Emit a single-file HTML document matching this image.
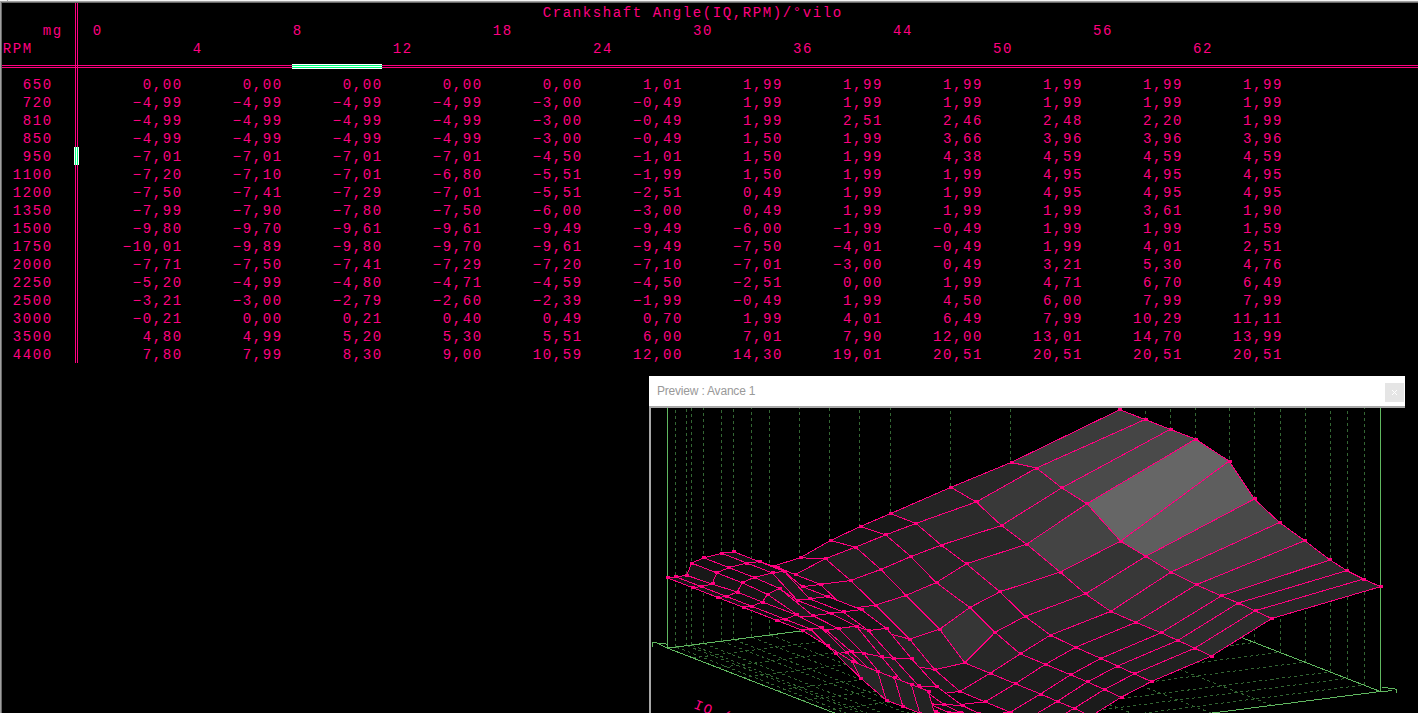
<!DOCTYPE html><html><head><meta charset="utf-8"><style>
html,body{margin:0;padding:0;background:#000;width:1418px;height:713px;overflow:hidden;position:relative}
.t{position:absolute;font-family:"Liberation Mono",monospace;font-size:14px;letter-spacing:1.600px;color:#ff0080;white-space:pre;line-height:18px}
</style></head><body>
<div style="position:absolute;left:0;top:0;width:1418px;height:1px;background:#f4f4f4"></div>
<div style="position:absolute;left:0;top:1px;width:1418px;height:1px;background:#a0a0a0"></div>
<div style="position:absolute;left:1px;top:2px;width:1417px;height:1px;background:#696969"></div>
<div style="position:absolute;left:0;top:1px;width:1px;height:712px;background:#a0a0a0"></div>
<div style="position:absolute;left:7px;top:0;width:1px;height:1px;background:#a0a0a0"></div>
<div style="position:absolute;left:1px;top:2px;width:1px;height:711px;background:#696969"></div>
<div class="t" style="left:542.80px;top:4px">Crankshaft Angle(IQ,RPM)/°vilo</div>
<div class="t" style="left:2.80px;top:22px">    mg   0                   8                   18                  30                  44                  56</div>
<div class="t" style="left:2.80px;top:40px">RPM                4                   12                  24                  36                  50                  62</div>
<div style="position:absolute;left:2px;top:65px;width:1416px;height:1px;background:#ff0080"></div>
<div style="position:absolute;left:2px;top:67px;width:1416px;height:1px;background:#ff0080"></div>
<div style="position:absolute;left:75px;top:3px;width:1px;height:360px;background:#ff0080"></div>
<div style="position:absolute;left:77px;top:3px;width:1px;height:360px;background:#ff0080"></div>
<div style="position:absolute;left:292px;top:64px;width:90px;height:5px;background:#fff"></div>
<div style="position:absolute;left:292px;top:65px;width:90px;height:1px;background:#00ff80"></div>
<div style="position:absolute;left:292px;top:67px;width:90px;height:1px;background:#00ff80"></div>
<div style="position:absolute;left:74px;top:147px;width:5px;height:18px;background:#fff"></div>
<div style="position:absolute;left:75px;top:147px;width:1px;height:18px;background:#00ff80"></div>
<div style="position:absolute;left:77px;top:147px;width:1px;height:18px;background:#00ff80"></div>
<div class="t" style="left:2.80px;top:76px">  650         0,00      0,00      0,00      0,00      0,00      1,01      1,99      1,99      1,99      1,99      1,99      1,99
  720        −4,99     −4,99     −4,99     −4,99     −3,00     −0,49      1,99      1,99      1,99      1,99      1,99      1,99
  810        −4,99     −4,99     −4,99     −4,99     −3,00     −0,49      1,99      2,51      2,46      2,48      2,20      1,99
  850        −4,99     −4,99     −4,99     −4,99     −3,00     −0,49      1,50      1,99      3,66      3,96      3,96      3,96
  950        −7,01     −7,01     −7,01     −7,01     −4,50     −1,01      1,50      1,99      4,38      4,59      4,59      4,59
 1100        −7,20     −7,10     −7,01     −6,80     −5,51     −1,99      1,50      1,99      1,99      4,95      4,95      4,95
 1200        −7,50     −7,41     −7,29     −7,01     −5,51     −2,51      0,49      1,99      1,99      4,95      4,95      4,95
 1350        −7,99     −7,90     −7,80     −7,50     −6,00     −3,00      0,49      1,99      1,99      1,99      3,61      1,90
 1500        −9,80     −9,70     −9,61     −9,61     −9,49     −9,49     −6,00     −1,99     −0,49      1,99      1,99      1,59
 1750       −10,01     −9,89     −9,80     −9,70     −9,61     −9,49     −7,50     −4,01     −0,49      1,99      4,01      2,51
 2000        −7,71     −7,50     −7,41     −7,29     −7,20     −7,10     −7,01     −3,00      0,49      3,21      5,30      4,76
 2250        −5,20     −4,99     −4,80     −4,71     −4,59     −4,50     −2,51      0,00      1,99      4,71      6,70      6,49
 2500        −3,21     −3,00     −2,79     −2,60     −2,39     −1,99     −0,49      1,99      4,50      6,00      7,99      7,99
 3000        −0,21      0,00      0,21      0,40      0,49      0,70      1,99      4,01      6,49      7,99     10,29     11,11
 3500         4,80      4,99      5,20      5,30      5,51      6,00      7,01      7,90     12,00     13,01     14,70     13,99
 4400         7,80      7,99      8,30      9,00     10,59     12,00     14,30     19,01     20,51     20,51     20,51     20,51</div>
<svg width="1418" height="713" style="position:absolute;left:0;top:0" shape-rendering="crispEdges">
<defs><clipPath id="cp"><rect x="651" y="408" width="767" height="305"/></clipPath></defs>
<g clip-path="url(#cp)">
<line x1="928.1" y1="749.4" x2="1380.4" y2="691.5" stroke="#336633" stroke-width="1" stroke-dasharray="3 3"/>
<line x1="911.3" y1="742.9" x2="1363.6" y2="685.0" stroke="#336633" stroke-width="1" stroke-dasharray="3 3"/>
<line x1="894.5" y1="736.3" x2="1346.8" y2="678.4" stroke="#336633" stroke-width="1" stroke-dasharray="3 3"/>
<line x1="877.7" y1="729.8" x2="1330.0" y2="671.9" stroke="#336633" stroke-width="1" stroke-dasharray="3 3"/>
<line x1="852.4" y1="720.0" x2="1304.7" y2="662.1" stroke="#336633" stroke-width="1" stroke-dasharray="3 3"/>
<line x1="827.2" y1="710.2" x2="1279.5" y2="652.3" stroke="#336633" stroke-width="1" stroke-dasharray="3 3"/>
<line x1="802.0" y1="700.4" x2="1254.3" y2="642.5" stroke="#336633" stroke-width="1" stroke-dasharray="3 3"/>
<line x1="776.8" y1="690.6" x2="1229.1" y2="632.7" stroke="#336633" stroke-width="1" stroke-dasharray="3 3"/>
<line x1="743.2" y1="677.5" x2="1195.5" y2="619.6" stroke="#336633" stroke-width="1" stroke-dasharray="3 3"/>
<line x1="717.9" y1="667.7" x2="1170.2" y2="609.8" stroke="#336633" stroke-width="1" stroke-dasharray="3 3"/>
<line x1="692.7" y1="657.9" x2="1145.0" y2="600.0" stroke="#336633" stroke-width="1" stroke-dasharray="3 3"/>
<line x1="667.5" y1="648.1" x2="1119.8" y2="590.2" stroke="#336633" stroke-width="1" stroke-dasharray="3 3"/>
<line x1="928.1" y1="749.4" x2="667.5" y2="648.1" stroke="#336633" stroke-width="1" stroke-dasharray="3 3"/>
<line x1="936.5" y1="748.3" x2="675.9" y2="647.0" stroke="#336633" stroke-width="1" stroke-dasharray="3 3"/>
<line x1="947.4" y1="746.9" x2="686.8" y2="645.6" stroke="#336633" stroke-width="1" stroke-dasharray="3 3"/>
<line x1="952.2" y1="746.3" x2="691.6" y2="645.0" stroke="#336633" stroke-width="1" stroke-dasharray="3 3"/>
<line x1="964.3" y1="744.8" x2="703.7" y2="643.5" stroke="#336633" stroke-width="1" stroke-dasharray="3 3"/>
<line x1="982.4" y1="742.5" x2="721.8" y2="641.2" stroke="#336633" stroke-width="1" stroke-dasharray="3 3"/>
<line x1="994.4" y1="740.9" x2="733.8" y2="639.6" stroke="#336633" stroke-width="1" stroke-dasharray="3 3"/>
<line x1="1012.5" y1="738.6" x2="751.9" y2="637.3" stroke="#336633" stroke-width="1" stroke-dasharray="3 3"/>
<line x1="1030.6" y1="736.3" x2="770.0" y2="635.0" stroke="#336633" stroke-width="1" stroke-dasharray="3 3"/>
<line x1="1060.8" y1="732.4" x2="800.2" y2="631.1" stroke="#336633" stroke-width="1" stroke-dasharray="3 3"/>
<line x1="1090.9" y1="728.6" x2="830.3" y2="627.3" stroke="#336633" stroke-width="1" stroke-dasharray="3 3"/>
<line x1="1121.1" y1="724.7" x2="860.5" y2="623.4" stroke="#336633" stroke-width="1" stroke-dasharray="3 3"/>
<line x1="1151.2" y1="720.8" x2="890.6" y2="619.5" stroke="#336633" stroke-width="1" stroke-dasharray="3 3"/>
<line x1="1211.5" y1="713.1" x2="950.9" y2="611.8" stroke="#336633" stroke-width="1" stroke-dasharray="3 3"/>
<line x1="1271.8" y1="705.4" x2="1011.2" y2="604.1" stroke="#336633" stroke-width="1" stroke-dasharray="3 3"/>
<line x1="1380.4" y1="691.5" x2="1119.8" y2="590.2" stroke="#336633" stroke-width="1" stroke-dasharray="3 3"/>
<line x1="675.5" y1="647.0" x2="675.5" y2="408" stroke="#336633" stroke-width="1" stroke-dasharray="3 3"/>
<line x1="686.5" y1="645.6" x2="686.5" y2="408" stroke="#336633" stroke-width="1" stroke-dasharray="3 3"/>
<line x1="691.5" y1="645.0" x2="691.5" y2="408" stroke="#336633" stroke-width="1" stroke-dasharray="3 3"/>
<line x1="703.5" y1="643.5" x2="703.5" y2="408" stroke="#336633" stroke-width="1" stroke-dasharray="3 3"/>
<line x1="721.5" y1="641.2" x2="721.5" y2="408" stroke="#336633" stroke-width="1" stroke-dasharray="3 3"/>
<line x1="733.5" y1="639.6" x2="733.5" y2="408" stroke="#336633" stroke-width="1" stroke-dasharray="3 3"/>
<line x1="751.5" y1="637.3" x2="751.5" y2="408" stroke="#336633" stroke-width="1" stroke-dasharray="3 3"/>
<line x1="769.5" y1="635.0" x2="769.5" y2="408" stroke="#336633" stroke-width="1" stroke-dasharray="3 3"/>
<line x1="799.5" y1="631.1" x2="799.5" y2="408" stroke="#336633" stroke-width="1" stroke-dasharray="3 3"/>
<line x1="829.5" y1="627.3" x2="829.5" y2="408" stroke="#336633" stroke-width="1" stroke-dasharray="3 3"/>
<line x1="859.5" y1="623.4" x2="859.5" y2="408" stroke="#336633" stroke-width="1" stroke-dasharray="3 3"/>
<line x1="890.5" y1="619.5" x2="890.5" y2="408" stroke="#336633" stroke-width="1" stroke-dasharray="3 3"/>
<line x1="950.5" y1="611.8" x2="950.5" y2="408" stroke="#336633" stroke-width="1" stroke-dasharray="3 3"/>
<line x1="1010.5" y1="604.1" x2="1010.5" y2="408" stroke="#336633" stroke-width="1" stroke-dasharray="3 3"/>
<line x1="1364.5" y1="685.0" x2="1364.5" y2="408" stroke="#336633" stroke-width="1" stroke-dasharray="3 3"/>
<line x1="1347.5" y1="678.4" x2="1347.5" y2="408" stroke="#336633" stroke-width="1" stroke-dasharray="3 3"/>
<line x1="1330.5" y1="671.9" x2="1330.5" y2="408" stroke="#336633" stroke-width="1" stroke-dasharray="3 3"/>
<line x1="1305.5" y1="662.1" x2="1305.5" y2="408" stroke="#336633" stroke-width="1" stroke-dasharray="3 3"/>
<line x1="1280.5" y1="652.3" x2="1280.5" y2="408" stroke="#336633" stroke-width="1" stroke-dasharray="3 3"/>
<line x1="1254.5" y1="642.5" x2="1254.5" y2="408" stroke="#336633" stroke-width="1" stroke-dasharray="3 3"/>
<line x1="1229.5" y1="632.7" x2="1229.5" y2="408" stroke="#336633" stroke-width="1" stroke-dasharray="3 3"/>
<line x1="1195.5" y1="619.6" x2="1195.5" y2="408" stroke="#336633" stroke-width="1" stroke-dasharray="3 3"/>
<line x1="1170.5" y1="609.8" x2="1170.5" y2="408" stroke="#336633" stroke-width="1" stroke-dasharray="3 3"/>
<line x1="1145.5" y1="600.0" x2="1145.5" y2="408" stroke="#336633" stroke-width="1" stroke-dasharray="3 3"/>
<polygon points="667.5,648.1 1119.8,590.2 1380.4,691.5 928.1,749.4" fill="none" stroke="#60b860" stroke-width="1"/>
<line x1="667.5" y1="648.1" x2="667.5" y2="400" stroke="#60b860" stroke-width="1"/>
<line x1="1380.5" y1="691.5" x2="1380.5" y2="400" stroke="#60b860" stroke-width="1"/>
<line x1="1119.5" y1="590.2" x2="1119.5" y2="400" stroke="#60b860" stroke-width="1"/>
<polyline points="652.5,646.5 652.5,642.5 656.5,642.5" fill="none" stroke="#60b860" stroke-width="1"/>
<polyline points="656,642.5 667,648" fill="none" stroke="#60b860" stroke-width="1"/>
<polyline points="657,643.5 665,643.5 667,644.5" fill="none" stroke="#60b860" stroke-width="1"/>
<polyline points="1377,691.5 1384,691.5 1392,690.5" fill="none" stroke="#60b860" stroke-width="1"/>
<polyline points="1382,687.5 1393,688.5 1396.5,689.5 1396.5,693" fill="none" stroke="#60b860" stroke-width="1"/>
<text x="693" y="708" transform="rotate(21.3 693 708)" font-family="Liberation Mono" font-size="14" letter-spacing="1.6" fill="#ff0080">IQ (mg)</text>
<polygon points="1036.5,468.0 1145.0,419.5 1119.8,409.7 1011.2,462.4" fill="#3b3b3b" stroke="#ff0080" stroke-width="1"/>
<rect x="1035" y="467" width="4" height="3" fill="#ff0080"/>
<rect x="1144" y="418" width="4" height="3" fill="#ff0080"/>
<rect x="1118" y="408" width="4" height="3" fill="#ff0080"/>
<rect x="1010" y="461" width="4" height="3" fill="#ff0080"/>
<polygon points="1061.7,487.9 1170.2,429.3 1145.0,419.5 1036.5,468.0" fill="#454545" stroke="#ff0080" stroke-width="1"/>
<rect x="1060" y="486" width="4" height="3" fill="#ff0080"/>
<rect x="1169" y="428" width="4" height="3" fill="#ff0080"/>
<rect x="1144" y="418" width="4" height="3" fill="#ff0080"/>
<rect x="1035" y="467" width="4" height="3" fill="#ff0080"/>
<polygon points="976.2,502.0 1036.5,468.0 1011.2,462.4 950.9,487.3" fill="#282828" stroke="#ff0080" stroke-width="1"/>
<rect x="975" y="500" width="4" height="3" fill="#ff0080"/>
<rect x="1035" y="467" width="4" height="3" fill="#ff0080"/>
<rect x="1010" y="461" width="4" height="3" fill="#ff0080"/>
<rect x="949" y="486" width="4" height="3" fill="#ff0080"/>
<polygon points="915.9,523.4 976.2,502.0 950.9,487.3 890.6,513.6" fill="#242424" stroke="#ff0080" stroke-width="1"/>
<rect x="914" y="522" width="4" height="3" fill="#ff0080"/>
<rect x="975" y="500" width="4" height="3" fill="#ff0080"/>
<rect x="949" y="486" width="4" height="3" fill="#ff0080"/>
<rect x="889" y="512" width="4" height="3" fill="#ff0080"/>
<polygon points="1086.9,503.7 1195.5,439.1 1170.2,429.3 1061.7,487.9" fill="#4a4a4a" stroke="#ff0080" stroke-width="1"/>
<rect x="1085" y="502" width="4" height="3" fill="#ff0080"/>
<rect x="1194" y="438" width="4" height="3" fill="#ff0080"/>
<rect x="1169" y="428" width="4" height="3" fill="#ff0080"/>
<rect x="1060" y="486" width="4" height="3" fill="#ff0080"/>
<polygon points="1001.4,525.5 1061.7,487.9 1036.5,468.0 976.2,502.0" fill="#393939" stroke="#ff0080" stroke-width="1"/>
<rect x="1000" y="524" width="4" height="3" fill="#ff0080"/>
<rect x="1060" y="486" width="4" height="3" fill="#ff0080"/>
<rect x="1035" y="467" width="4" height="3" fill="#ff0080"/>
<rect x="975" y="500" width="4" height="3" fill="#ff0080"/>
<polygon points="885.7,534.9 915.9,523.4 890.6,513.6 860.5,526.4" fill="#181818" stroke="#ff0080" stroke-width="1"/>
<rect x="884" y="533" width="4" height="3" fill="#ff0080"/>
<rect x="914" y="522" width="4" height="3" fill="#ff0080"/>
<rect x="889" y="512" width="4" height="3" fill="#ff0080"/>
<rect x="859" y="525" width="4" height="3" fill="#ff0080"/>
<polygon points="855.5,547.1 885.7,534.9 860.5,526.4 830.3,540.6" fill="#161616" stroke="#ff0080" stroke-width="1"/>
<rect x="854" y="546" width="4" height="3" fill="#ff0080"/>
<rect x="884" y="533" width="4" height="3" fill="#ff0080"/>
<rect x="859" y="525" width="4" height="3" fill="#ff0080"/>
<rect x="829" y="539" width="4" height="3" fill="#ff0080"/>
<polygon points="941.1,545.1 1001.4,525.5 976.2,502.0 915.9,523.4" fill="#2b2b2b" stroke="#ff0080" stroke-width="1"/>
<rect x="940" y="544" width="4" height="3" fill="#ff0080"/>
<rect x="1000" y="524" width="4" height="3" fill="#ff0080"/>
<rect x="975" y="500" width="4" height="3" fill="#ff0080"/>
<rect x="914" y="522" width="4" height="3" fill="#ff0080"/>
<polygon points="1026.6,544.2 1086.9,503.7 1061.7,487.9 1001.4,525.5" fill="#383838" stroke="#ff0080" stroke-width="1"/>
<rect x="1025" y="543" width="4" height="3" fill="#ff0080"/>
<rect x="1085" y="502" width="4" height="3" fill="#ff0080"/>
<rect x="1060" y="486" width="4" height="3" fill="#ff0080"/>
<rect x="1000" y="524" width="4" height="3" fill="#ff0080"/>
<polygon points="1120.5,541.2 1229.1,461.1 1195.5,439.1 1086.9,503.7" fill="#666666" stroke="#ff0080" stroke-width="1"/>
<rect x="1119" y="540" width="4" height="3" fill="#ff0080"/>
<rect x="1228" y="460" width="4" height="3" fill="#ff0080"/>
<rect x="1194" y="438" width="4" height="3" fill="#ff0080"/>
<rect x="1085" y="502" width="4" height="3" fill="#ff0080"/>
<polygon points="825.4,558.7 855.5,547.1 830.3,540.6 800.2,557.8" fill="#131313" stroke="#ff0080" stroke-width="1"/>
<rect x="824" y="557" width="4" height="3" fill="#ff0080"/>
<rect x="854" y="546" width="4" height="3" fill="#ff0080"/>
<rect x="829" y="539" width="4" height="3" fill="#ff0080"/>
<rect x="799" y="556" width="4" height="3" fill="#ff0080"/>
<polygon points="910.9,556.6 941.1,545.1 915.9,523.4 885.7,534.9" fill="#222222" stroke="#ff0080" stroke-width="1"/>
<rect x="909" y="555" width="4" height="3" fill="#ff0080"/>
<rect x="940" y="544" width="4" height="3" fill="#ff0080"/>
<rect x="914" y="522" width="4" height="3" fill="#ff0080"/>
<rect x="884" y="533" width="4" height="3" fill="#ff0080"/>
<polygon points="795.2,574.6 825.4,558.7 800.2,557.8 770.0,567.1" fill="#121212" stroke="#ff0080" stroke-width="1"/>
<rect x="794" y="573" width="4" height="3" fill="#ff0080"/>
<rect x="824" y="557" width="4" height="3" fill="#ff0080"/>
<rect x="799" y="556" width="4" height="3" fill="#ff0080"/>
<rect x="769" y="566" width="4" height="3" fill="#ff0080"/>
<polygon points="880.8,569.4 910.9,556.6 885.7,534.9 855.5,547.1" fill="#222222" stroke="#ff0080" stroke-width="1"/>
<rect x="879" y="568" width="4" height="3" fill="#ff0080"/>
<rect x="909" y="555" width="4" height="3" fill="#ff0080"/>
<rect x="884" y="533" width="4" height="3" fill="#ff0080"/>
<rect x="854" y="546" width="4" height="3" fill="#ff0080"/>
<polygon points="966.3,563.8 1026.6,544.2 1001.4,525.5 941.1,545.1" fill="#272727" stroke="#ff0080" stroke-width="1"/>
<rect x="965" y="562" width="4" height="3" fill="#ff0080"/>
<rect x="1025" y="543" width="4" height="3" fill="#ff0080"/>
<rect x="1000" y="524" width="4" height="3" fill="#ff0080"/>
<rect x="940" y="544" width="4" height="3" fill="#ff0080"/>
<polygon points="777.1,567.2 795.2,574.6 770.0,567.1 751.9,567.6" fill="#141414" stroke="#ff0080" stroke-width="1"/>
<rect x="776" y="566" width="4" height="3" fill="#ff0080"/>
<rect x="794" y="573" width="4" height="3" fill="#ff0080"/>
<rect x="769" y="566" width="4" height="3" fill="#ff0080"/>
<rect x="750" y="566" width="4" height="3" fill="#ff0080"/>
<polygon points="759.1,561.6 777.1,567.2 751.9,567.6 733.8,551.8" fill="#111111" stroke="#ff0080" stroke-width="1"/>
<rect x="758" y="560" width="4" height="3" fill="#ff0080"/>
<rect x="776" y="566" width="4" height="3" fill="#ff0080"/>
<rect x="750" y="566" width="4" height="3" fill="#ff0080"/>
<rect x="732" y="550" width="4" height="3" fill="#ff0080"/>
<polygon points="850.6,580.5 880.8,569.4 855.5,547.1 825.4,558.7" fill="#222222" stroke="#ff0080" stroke-width="1"/>
<rect x="849" y="579" width="4" height="3" fill="#ff0080"/>
<rect x="879" y="568" width="4" height="3" fill="#ff0080"/>
<rect x="854" y="546" width="4" height="3" fill="#ff0080"/>
<rect x="824" y="557" width="4" height="3" fill="#ff0080"/>
<polygon points="1060.2,572.1 1120.5,541.2 1086.9,503.7 1026.6,544.2" fill="#444444" stroke="#ff0080" stroke-width="1"/>
<rect x="1059" y="571" width="4" height="3" fill="#ff0080"/>
<rect x="1119" y="540" width="4" height="3" fill="#ff0080"/>
<rect x="1085" y="502" width="4" height="3" fill="#ff0080"/>
<rect x="1025" y="543" width="4" height="3" fill="#ff0080"/>
<polygon points="1145.8,556.3 1254.3,499.0 1229.1,461.1 1120.5,541.2" fill="#5e5e5e" stroke="#ff0080" stroke-width="1"/>
<rect x="1144" y="555" width="4" height="3" fill="#ff0080"/>
<rect x="1253" y="497" width="4" height="3" fill="#ff0080"/>
<rect x="1228" y="460" width="4" height="3" fill="#ff0080"/>
<rect x="1119" y="540" width="4" height="3" fill="#ff0080"/>
<polygon points="747.0,563.1 759.1,561.6 733.8,551.8 721.8,553.3" fill="#161616" stroke="#ff0080" stroke-width="1"/>
<rect x="745" y="562" width="4" height="3" fill="#ff0080"/>
<rect x="758" y="560" width="4" height="3" fill="#ff0080"/>
<rect x="732" y="550" width="4" height="3" fill="#ff0080"/>
<rect x="720" y="552" width="4" height="3" fill="#ff0080"/>
<polygon points="936.1,582.6 966.3,563.8 941.1,545.1 910.9,556.6" fill="#262626" stroke="#ff0080" stroke-width="1"/>
<rect x="935" y="581" width="4" height="3" fill="#ff0080"/>
<rect x="965" y="562" width="4" height="3" fill="#ff0080"/>
<rect x="940" y="544" width="4" height="3" fill="#ff0080"/>
<rect x="909" y="555" width="4" height="3" fill="#ff0080"/>
<polygon points="728.9,567.6 747.0,563.1 721.8,553.3 703.7,557.8" fill="#111111" stroke="#ff0080" stroke-width="1"/>
<rect x="727" y="566" width="4" height="3" fill="#ff0080"/>
<rect x="745" y="562" width="4" height="3" fill="#ff0080"/>
<rect x="720" y="552" width="4" height="3" fill="#ff0080"/>
<rect x="702" y="556" width="4" height="3" fill="#ff0080"/>
<polygon points="820.5,584.4 850.6,580.5 825.4,558.7 795.2,574.6" fill="#1c1c1c" stroke="#ff0080" stroke-width="1"/>
<rect x="819" y="583" width="4" height="3" fill="#ff0080"/>
<rect x="849" y="579" width="4" height="3" fill="#ff0080"/>
<rect x="824" y="557" width="4" height="3" fill="#ff0080"/>
<rect x="794" y="573" width="4" height="3" fill="#ff0080"/>
<polygon points="716.8,572.9 728.9,567.6 703.7,557.8 691.6,563.1" fill="#101010" stroke="#ff0080" stroke-width="1"/>
<rect x="715" y="571" width="4" height="3" fill="#ff0080"/>
<rect x="727" y="566" width="4" height="3" fill="#ff0080"/>
<rect x="702" y="556" width="4" height="3" fill="#ff0080"/>
<rect x="690" y="562" width="4" height="3" fill="#ff0080"/>
<polygon points="906.0,595.4 936.1,582.6 910.9,556.6 880.8,569.4" fill="#252525" stroke="#ff0080" stroke-width="1"/>
<rect x="904" y="594" width="4" height="3" fill="#ff0080"/>
<rect x="935" y="581" width="4" height="3" fill="#ff0080"/>
<rect x="909" y="555" width="4" height="3" fill="#ff0080"/>
<rect x="879" y="568" width="4" height="3" fill="#ff0080"/>
<polygon points="712.0,584.0 716.8,572.9 691.6,563.1 686.8,575.4" fill="#181818" stroke="#ff0080" stroke-width="1"/>
<rect x="711" y="582" width="4" height="3" fill="#ff0080"/>
<rect x="715" y="571" width="4" height="3" fill="#ff0080"/>
<rect x="690" y="562" width="4" height="3" fill="#ff0080"/>
<rect x="685" y="574" width="4" height="3" fill="#ff0080"/>
<polygon points="802.4,586.7 820.5,584.4 795.2,574.6 777.1,567.2" fill="#141414" stroke="#ff0080" stroke-width="1"/>
<rect x="801" y="585" width="4" height="3" fill="#ff0080"/>
<rect x="819" y="583" width="4" height="3" fill="#ff0080"/>
<rect x="794" y="573" width="4" height="3" fill="#ff0080"/>
<rect x="776" y="566" width="4" height="3" fill="#ff0080"/>
<polygon points="701.2,586.6 712.0,584.0 686.8,575.4 675.9,576.8" fill="#161616" stroke="#ff0080" stroke-width="1"/>
<rect x="700" y="585" width="4" height="3" fill="#ff0080"/>
<rect x="711" y="582" width="4" height="3" fill="#ff0080"/>
<rect x="685" y="574" width="4" height="3" fill="#ff0080"/>
<rect x="674" y="575" width="4" height="3" fill="#ff0080"/>
<polygon points="999.9,591.8 1060.2,572.1 1026.6,544.2 966.3,563.8" fill="#303030" stroke="#ff0080" stroke-width="1"/>
<rect x="998" y="590" width="4" height="3" fill="#ff0080"/>
<rect x="1059" y="571" width="4" height="3" fill="#ff0080"/>
<rect x="1025" y="543" width="4" height="3" fill="#ff0080"/>
<rect x="965" y="562" width="4" height="3" fill="#ff0080"/>
<polygon points="692.7,587.7 701.2,586.6 675.9,576.8 667.5,577.9" fill="#161616" stroke="#ff0080" stroke-width="1"/>
<rect x="691" y="586" width="4" height="3" fill="#ff0080"/>
<rect x="700" y="585" width="4" height="3" fill="#ff0080"/>
<rect x="674" y="575" width="4" height="3" fill="#ff0080"/>
<rect x="666" y="576" width="4" height="3" fill="#ff0080"/>
<polygon points="784.3,571.4 802.4,586.7 777.1,567.2 759.1,561.6" fill="#141414" stroke="#ff0080" stroke-width="1"/>
<rect x="783" y="570" width="4" height="3" fill="#ff0080"/>
<rect x="801" y="585" width="4" height="3" fill="#ff0080"/>
<rect x="776" y="566" width="4" height="3" fill="#ff0080"/>
<rect x="758" y="560" width="4" height="3" fill="#ff0080"/>
<polygon points="875.8,605.1 906.0,595.4 880.8,569.4 850.6,580.5" fill="#232323" stroke="#ff0080" stroke-width="1"/>
<rect x="874" y="604" width="4" height="3" fill="#ff0080"/>
<rect x="904" y="594" width="4" height="3" fill="#ff0080"/>
<rect x="879" y="568" width="4" height="3" fill="#ff0080"/>
<rect x="849" y="579" width="4" height="3" fill="#ff0080"/>
<polygon points="1171.0,572.1 1279.5,522.5 1254.3,499.0 1145.8,556.3" fill="#494949" stroke="#ff0080" stroke-width="1"/>
<rect x="1169" y="571" width="4" height="3" fill="#ff0080"/>
<rect x="1278" y="521" width="4" height="3" fill="#ff0080"/>
<rect x="1253" y="497" width="4" height="3" fill="#ff0080"/>
<rect x="1144" y="555" width="4" height="3" fill="#ff0080"/>
<polygon points="772.2,572.9 784.3,571.4 759.1,561.6 747.0,563.1" fill="#121212" stroke="#ff0080" stroke-width="1"/>
<rect x="771" y="571" width="4" height="3" fill="#ff0080"/>
<rect x="783" y="570" width="4" height="3" fill="#ff0080"/>
<rect x="758" y="560" width="4" height="3" fill="#ff0080"/>
<rect x="745" y="562" width="4" height="3" fill="#ff0080"/>
<polygon points="1085.4,593.9 1145.8,556.3 1120.5,541.2 1060.2,572.1" fill="#343434" stroke="#ff0080" stroke-width="1"/>
<rect x="1084" y="592" width="4" height="3" fill="#ff0080"/>
<rect x="1144" y="555" width="4" height="3" fill="#ff0080"/>
<rect x="1119" y="540" width="4" height="3" fill="#ff0080"/>
<rect x="1059" y="571" width="4" height="3" fill="#ff0080"/>
<polygon points="754.1,577.4 772.2,572.9 747.0,563.1 728.9,567.6" fill="#111111" stroke="#ff0080" stroke-width="1"/>
<rect x="753" y="576" width="4" height="3" fill="#ff0080"/>
<rect x="771" y="571" width="4" height="3" fill="#ff0080"/>
<rect x="745" y="562" width="4" height="3" fill="#ff0080"/>
<rect x="727" y="566" width="4" height="3" fill="#ff0080"/>
<polygon points="969.8,607.5 999.9,591.8 966.3,563.8 936.1,582.6" fill="#2c2c2c" stroke="#ff0080" stroke-width="1"/>
<rect x="968" y="606" width="4" height="3" fill="#ff0080"/>
<rect x="998" y="590" width="4" height="3" fill="#ff0080"/>
<rect x="965" y="562" width="4" height="3" fill="#ff0080"/>
<rect x="935" y="581" width="4" height="3" fill="#ff0080"/>
<polygon points="845.7,608.9 875.8,605.1 850.6,580.5 820.5,584.4" fill="#1e1e1e" stroke="#ff0080" stroke-width="1"/>
<rect x="844" y="607" width="4" height="3" fill="#ff0080"/>
<rect x="874" y="604" width="4" height="3" fill="#ff0080"/>
<rect x="849" y="579" width="4" height="3" fill="#ff0080"/>
<rect x="819" y="583" width="4" height="3" fill="#ff0080"/>
<polygon points="742.1,582.7 754.1,577.4 728.9,567.6 716.8,572.9" fill="#101010" stroke="#ff0080" stroke-width="1"/>
<rect x="741" y="581" width="4" height="3" fill="#ff0080"/>
<rect x="753" y="576" width="4" height="3" fill="#ff0080"/>
<rect x="727" y="566" width="4" height="3" fill="#ff0080"/>
<rect x="715" y="571" width="4" height="3" fill="#ff0080"/>
<polygon points="737.2,592.1 742.1,582.7 716.8,572.9 712.0,584.0" fill="#161616" stroke="#ff0080" stroke-width="1"/>
<rect x="736" y="591" width="4" height="3" fill="#ff0080"/>
<rect x="741" y="581" width="4" height="3" fill="#ff0080"/>
<rect x="715" y="571" width="4" height="3" fill="#ff0080"/>
<rect x="711" y="582" width="4" height="3" fill="#ff0080"/>
<polygon points="827.6,596.5 845.7,608.9 820.5,584.4 802.4,586.7" fill="#141414" stroke="#ff0080" stroke-width="1"/>
<rect x="826" y="595" width="4" height="3" fill="#ff0080"/>
<rect x="844" y="607" width="4" height="3" fill="#ff0080"/>
<rect x="819" y="583" width="4" height="3" fill="#ff0080"/>
<rect x="801" y="585" width="4" height="3" fill="#ff0080"/>
<polygon points="726.4,596.4 737.2,592.1 712.0,584.0 701.2,586.6" fill="#161616" stroke="#ff0080" stroke-width="1"/>
<rect x="725" y="595" width="4" height="3" fill="#ff0080"/>
<rect x="736" y="591" width="4" height="3" fill="#ff0080"/>
<rect x="711" y="582" width="4" height="3" fill="#ff0080"/>
<rect x="700" y="585" width="4" height="3" fill="#ff0080"/>
<polygon points="939.6,629.2 969.8,607.5 936.1,582.6 906.0,595.4" fill="#2e2e2e" stroke="#ff0080" stroke-width="1"/>
<rect x="938" y="628" width="4" height="3" fill="#ff0080"/>
<rect x="968" y="606" width="4" height="3" fill="#ff0080"/>
<rect x="935" y="581" width="4" height="3" fill="#ff0080"/>
<rect x="904" y="594" width="4" height="3" fill="#ff0080"/>
<polygon points="717.9,597.5 726.4,596.4 701.2,586.6 692.7,587.7" fill="#161616" stroke="#ff0080" stroke-width="1"/>
<rect x="716" y="596" width="4" height="3" fill="#ff0080"/>
<rect x="725" y="595" width="4" height="3" fill="#ff0080"/>
<rect x="700" y="585" width="4" height="3" fill="#ff0080"/>
<rect x="691" y="586" width="4" height="3" fill="#ff0080"/>
<polygon points="809.5,598.8 827.6,596.5 802.4,586.7 784.3,571.4" fill="#1b1b1b" stroke="#ff0080" stroke-width="1"/>
<rect x="808" y="597" width="4" height="3" fill="#ff0080"/>
<rect x="826" y="595" width="4" height="3" fill="#ff0080"/>
<rect x="801" y="585" width="4" height="3" fill="#ff0080"/>
<rect x="783" y="570" width="4" height="3" fill="#ff0080"/>
<polygon points="1025.1,616.4 1085.4,593.9 1060.2,572.1 999.9,591.8" fill="#2c2c2c" stroke="#ff0080" stroke-width="1"/>
<rect x="1024" y="615" width="4" height="3" fill="#ff0080"/>
<rect x="1084" y="592" width="4" height="3" fill="#ff0080"/>
<rect x="1059" y="571" width="4" height="3" fill="#ff0080"/>
<rect x="998" y="590" width="4" height="3" fill="#ff0080"/>
<polygon points="1196.2,584.8 1304.7,540.7 1279.5,522.5 1171.0,572.1" fill="#3e3e3e" stroke="#ff0080" stroke-width="1"/>
<rect x="1195" y="583" width="4" height="3" fill="#ff0080"/>
<rect x="1303" y="539" width="4" height="3" fill="#ff0080"/>
<rect x="1278" y="521" width="4" height="3" fill="#ff0080"/>
<rect x="1169" y="571" width="4" height="3" fill="#ff0080"/>
<polygon points="797.4,600.4 809.5,598.8 784.3,571.4 772.2,572.9" fill="#1d1d1d" stroke="#ff0080" stroke-width="1"/>
<rect x="796" y="599" width="4" height="3" fill="#ff0080"/>
<rect x="808" y="597" width="4" height="3" fill="#ff0080"/>
<rect x="783" y="570" width="4" height="3" fill="#ff0080"/>
<rect x="771" y="571" width="4" height="3" fill="#ff0080"/>
<polygon points="909.5,639.1 939.6,629.2 906.0,595.4 875.8,605.1" fill="#2c2c2c" stroke="#ff0080" stroke-width="1"/>
<rect x="908" y="638" width="4" height="3" fill="#ff0080"/>
<rect x="938" y="628" width="4" height="3" fill="#ff0080"/>
<rect x="904" y="594" width="4" height="3" fill="#ff0080"/>
<rect x="874" y="604" width="4" height="3" fill="#ff0080"/>
<polygon points="1110.7,611.4 1171.0,572.1 1145.8,556.3 1085.4,593.9" fill="#383838" stroke="#ff0080" stroke-width="1"/>
<rect x="1109" y="610" width="4" height="3" fill="#ff0080"/>
<rect x="1169" y="571" width="4" height="3" fill="#ff0080"/>
<rect x="1144" y="555" width="4" height="3" fill="#ff0080"/>
<rect x="1084" y="592" width="4" height="3" fill="#ff0080"/>
<polygon points="779.3,588.4 797.4,600.4 772.2,572.9 754.1,577.4" fill="#1c1c1c" stroke="#ff0080" stroke-width="1"/>
<rect x="778" y="587" width="4" height="3" fill="#ff0080"/>
<rect x="796" y="599" width="4" height="3" fill="#ff0080"/>
<rect x="771" y="571" width="4" height="3" fill="#ff0080"/>
<rect x="753" y="576" width="4" height="3" fill="#ff0080"/>
<polygon points="767.3,594.3 779.3,588.4 754.1,577.4 742.1,582.7" fill="#121212" stroke="#ff0080" stroke-width="1"/>
<rect x="766" y="593" width="4" height="3" fill="#ff0080"/>
<rect x="778" y="587" width="4" height="3" fill="#ff0080"/>
<rect x="753" y="576" width="4" height="3" fill="#ff0080"/>
<rect x="741" y="581" width="4" height="3" fill="#ff0080"/>
<polygon points="995.0,632.3 1025.1,616.4 999.9,591.8 969.8,607.5" fill="#282828" stroke="#ff0080" stroke-width="1"/>
<rect x="993" y="631" width="4" height="3" fill="#ff0080"/>
<rect x="1024" y="615" width="4" height="3" fill="#ff0080"/>
<rect x="998" y="590" width="4" height="3" fill="#ff0080"/>
<rect x="968" y="606" width="4" height="3" fill="#ff0080"/>
<polygon points="879.3,630.9 909.5,639.1 875.8,605.1 845.7,608.9" fill="#222222" stroke="#ff0080" stroke-width="1"/>
<rect x="878" y="629" width="4" height="3" fill="#ff0080"/>
<rect x="908" y="638" width="4" height="3" fill="#ff0080"/>
<rect x="874" y="604" width="4" height="3" fill="#ff0080"/>
<rect x="844" y="607" width="4" height="3" fill="#ff0080"/>
<polygon points="762.5,602.0 767.3,594.3 742.1,582.7 737.2,592.1" fill="#151515" stroke="#ff0080" stroke-width="1"/>
<rect x="761" y="601" width="4" height="3" fill="#ff0080"/>
<rect x="766" y="593" width="4" height="3" fill="#ff0080"/>
<rect x="741" y="581" width="4" height="3" fill="#ff0080"/>
<rect x="736" y="591" width="4" height="3" fill="#ff0080"/>
<polygon points="751.6,606.2 762.5,602.0 737.2,592.1 726.4,596.4" fill="#111111" stroke="#ff0080" stroke-width="1"/>
<rect x="750" y="605" width="4" height="3" fill="#ff0080"/>
<rect x="761" y="601" width="4" height="3" fill="#ff0080"/>
<rect x="736" y="591" width="4" height="3" fill="#ff0080"/>
<rect x="725" y="595" width="4" height="3" fill="#ff0080"/>
<polygon points="743.2,607.3 751.6,606.2 726.4,596.4 717.9,597.5" fill="#161616" stroke="#ff0080" stroke-width="1"/>
<rect x="742" y="606" width="4" height="3" fill="#ff0080"/>
<rect x="750" y="605" width="4" height="3" fill="#ff0080"/>
<rect x="725" y="595" width="4" height="3" fill="#ff0080"/>
<rect x="716" y="596" width="4" height="3" fill="#ff0080"/>
<polygon points="861.2,609.6 879.3,630.9 845.7,608.9 827.6,596.5" fill="#1b1b1b" stroke="#ff0080" stroke-width="1"/>
<rect x="860" y="608" width="4" height="3" fill="#ff0080"/>
<rect x="878" y="629" width="4" height="3" fill="#ff0080"/>
<rect x="844" y="607" width="4" height="3" fill="#ff0080"/>
<rect x="826" y="595" width="4" height="3" fill="#ff0080"/>
<polygon points="964.8,662.9 995.0,632.3 969.8,607.5 939.6,629.2" fill="#363636" stroke="#ff0080" stroke-width="1"/>
<rect x="963" y="661" width="4" height="3" fill="#ff0080"/>
<rect x="993" y="631" width="4" height="3" fill="#ff0080"/>
<rect x="968" y="606" width="4" height="3" fill="#ff0080"/>
<rect x="938" y="628" width="4" height="3" fill="#ff0080"/>
<polygon points="1050.4,635.1 1110.7,611.4 1085.4,593.9 1025.1,616.4" fill="#2a2a2a" stroke="#ff0080" stroke-width="1"/>
<rect x="1049" y="634" width="4" height="3" fill="#ff0080"/>
<rect x="1109" y="610" width="4" height="3" fill="#ff0080"/>
<rect x="1084" y="592" width="4" height="3" fill="#ff0080"/>
<rect x="1024" y="615" width="4" height="3" fill="#ff0080"/>
<polygon points="1221.4,595.9 1330.0,559.9 1304.7,540.7 1196.2,584.8" fill="#373737" stroke="#ff0080" stroke-width="1"/>
<rect x="1220" y="594" width="4" height="3" fill="#ff0080"/>
<rect x="1328" y="558" width="4" height="3" fill="#ff0080"/>
<rect x="1303" y="539" width="4" height="3" fill="#ff0080"/>
<rect x="1195" y="583" width="4" height="3" fill="#ff0080"/>
<polygon points="843.1,611.9 861.2,609.6 827.6,596.5 809.5,598.8" fill="#111111" stroke="#ff0080" stroke-width="1"/>
<rect x="842" y="610" width="4" height="3" fill="#ff0080"/>
<rect x="860" y="608" width="4" height="3" fill="#ff0080"/>
<rect x="826" y="595" width="4" height="3" fill="#ff0080"/>
<rect x="808" y="597" width="4" height="3" fill="#ff0080"/>
<polygon points="1135.9,622.4 1196.2,584.8 1171.0,572.1 1110.7,611.4" fill="#333333" stroke="#ff0080" stroke-width="1"/>
<rect x="1134" y="621" width="4" height="3" fill="#ff0080"/>
<rect x="1195" y="583" width="4" height="3" fill="#ff0080"/>
<rect x="1169" y="571" width="4" height="3" fill="#ff0080"/>
<rect x="1109" y="610" width="4" height="3" fill="#ff0080"/>
<polygon points="831.1,613.4 843.1,611.9 809.5,598.8 797.4,600.4" fill="#121212" stroke="#ff0080" stroke-width="1"/>
<rect x="830" y="612" width="4" height="3" fill="#ff0080"/>
<rect x="842" y="610" width="4" height="3" fill="#ff0080"/>
<rect x="808" y="597" width="4" height="3" fill="#ff0080"/>
<rect x="796" y="599" width="4" height="3" fill="#ff0080"/>
<polygon points="934.7,669.7 964.8,662.9 939.6,629.2 909.5,639.1" fill="#282828" stroke="#ff0080" stroke-width="1"/>
<rect x="933" y="668" width="4" height="3" fill="#ff0080"/>
<rect x="963" y="661" width="4" height="3" fill="#ff0080"/>
<rect x="938" y="628" width="4" height="3" fill="#ff0080"/>
<rect x="908" y="638" width="4" height="3" fill="#ff0080"/>
<polygon points="813.0,615.7 831.1,613.4 797.4,600.4 779.3,588.4" fill="#171717" stroke="#ff0080" stroke-width="1"/>
<rect x="811" y="614" width="4" height="3" fill="#ff0080"/>
<rect x="830" y="612" width="4" height="3" fill="#ff0080"/>
<rect x="796" y="599" width="4" height="3" fill="#ff0080"/>
<rect x="778" y="587" width="4" height="3" fill="#ff0080"/>
<polygon points="1020.2,653.9 1050.4,635.1 1025.1,616.4 995.0,632.3" fill="#262626" stroke="#ff0080" stroke-width="1"/>
<rect x="1019" y="652" width="4" height="3" fill="#ff0080"/>
<rect x="1049" y="634" width="4" height="3" fill="#ff0080"/>
<rect x="1024" y="615" width="4" height="3" fill="#ff0080"/>
<rect x="993" y="631" width="4" height="3" fill="#ff0080"/>
<polygon points="800.9,617.3 813.0,615.7 779.3,588.4 767.3,594.3" fill="#1d1d1d" stroke="#ff0080" stroke-width="1"/>
<rect x="799" y="616" width="4" height="3" fill="#ff0080"/>
<rect x="811" y="614" width="4" height="3" fill="#ff0080"/>
<rect x="778" y="587" width="4" height="3" fill="#ff0080"/>
<rect x="766" y="593" width="4" height="3" fill="#ff0080"/>
<polygon points="904.5,664.6 934.7,669.7 909.5,639.1 879.3,630.9" fill="#262626" stroke="#ff0080" stroke-width="1"/>
<rect x="903" y="663" width="4" height="3" fill="#ff0080"/>
<rect x="933" y="668" width="4" height="3" fill="#ff0080"/>
<rect x="908" y="638" width="4" height="3" fill="#ff0080"/>
<rect x="878" y="629" width="4" height="3" fill="#ff0080"/>
<polygon points="796.1,614.8 800.9,617.3 767.3,594.3 762.5,602.0" fill="#171717" stroke="#ff0080" stroke-width="1"/>
<rect x="795" y="613" width="4" height="3" fill="#ff0080"/>
<rect x="799" y="616" width="4" height="3" fill="#ff0080"/>
<rect x="766" y="593" width="4" height="3" fill="#ff0080"/>
<rect x="761" y="601" width="4" height="3" fill="#ff0080"/>
<polygon points="1238.2,603.0 1346.8,570.6 1330.0,559.9 1221.4,595.9" fill="#2b2b2b" stroke="#ff0080" stroke-width="1"/>
<rect x="1237" y="602" width="4" height="3" fill="#ff0080"/>
<rect x="1345" y="569" width="4" height="3" fill="#ff0080"/>
<rect x="1328" y="558" width="4" height="3" fill="#ff0080"/>
<rect x="1220" y="594" width="4" height="3" fill="#ff0080"/>
<polygon points="785.2,619.3 796.1,614.8 762.5,602.0 751.6,606.2" fill="#121212" stroke="#ff0080" stroke-width="1"/>
<rect x="784" y="618" width="4" height="3" fill="#ff0080"/>
<rect x="795" y="613" width="4" height="3" fill="#ff0080"/>
<rect x="761" y="601" width="4" height="3" fill="#ff0080"/>
<rect x="750" y="605" width="4" height="3" fill="#ff0080"/>
<polygon points="990.1,673.3 1020.2,653.9 995.0,632.3 964.8,662.9" fill="#282828" stroke="#ff0080" stroke-width="1"/>
<rect x="989" y="672" width="4" height="3" fill="#ff0080"/>
<rect x="1019" y="652" width="4" height="3" fill="#ff0080"/>
<rect x="993" y="631" width="4" height="3" fill="#ff0080"/>
<rect x="963" y="661" width="4" height="3" fill="#ff0080"/>
<polygon points="1075.6,647.3 1135.9,622.4 1110.7,611.4 1050.4,635.1" fill="#242424" stroke="#ff0080" stroke-width="1"/>
<rect x="1074" y="646" width="4" height="3" fill="#ff0080"/>
<rect x="1134" y="621" width="4" height="3" fill="#ff0080"/>
<rect x="1109" y="610" width="4" height="3" fill="#ff0080"/>
<rect x="1049" y="634" width="4" height="3" fill="#ff0080"/>
<polygon points="776.8,620.4 785.2,619.3 751.6,606.2 743.2,607.3" fill="#101010" stroke="#ff0080" stroke-width="1"/>
<rect x="775" y="619" width="4" height="3" fill="#ff0080"/>
<rect x="784" y="618" width="4" height="3" fill="#ff0080"/>
<rect x="750" y="605" width="4" height="3" fill="#ff0080"/>
<rect x="742" y="606" width="4" height="3" fill="#ff0080"/>
<polygon points="886.4,628.3 904.5,664.6 879.3,630.9 861.2,609.6" fill="#262626" stroke="#ff0080" stroke-width="1"/>
<rect x="885" y="627" width="4" height="3" fill="#ff0080"/>
<rect x="903" y="663" width="4" height="3" fill="#ff0080"/>
<rect x="878" y="629" width="4" height="3" fill="#ff0080"/>
<rect x="860" y="608" width="4" height="3" fill="#ff0080"/>
<polygon points="1161.1,632.8 1221.4,595.9 1196.2,584.8 1135.9,622.4" fill="#313131" stroke="#ff0080" stroke-width="1"/>
<rect x="1160" y="631" width="4" height="3" fill="#ff0080"/>
<rect x="1220" y="594" width="4" height="3" fill="#ff0080"/>
<rect x="1195" y="583" width="4" height="3" fill="#ff0080"/>
<rect x="1134" y="621" width="4" height="3" fill="#ff0080"/>
<polygon points="868.3,630.6 886.4,628.3 861.2,609.6 843.1,611.9" fill="#161616" stroke="#ff0080" stroke-width="1"/>
<rect x="867" y="629" width="4" height="3" fill="#ff0080"/>
<rect x="885" y="627" width="4" height="3" fill="#ff0080"/>
<rect x="860" y="608" width="4" height="3" fill="#ff0080"/>
<rect x="842" y="610" width="4" height="3" fill="#ff0080"/>
<polygon points="959.9,691.4 990.1,673.3 964.8,662.9 934.7,669.7" fill="#1d1d1d" stroke="#ff0080" stroke-width="1"/>
<rect x="958" y="690" width="4" height="3" fill="#ff0080"/>
<rect x="989" y="672" width="4" height="3" fill="#ff0080"/>
<rect x="963" y="661" width="4" height="3" fill="#ff0080"/>
<rect x="933" y="668" width="4" height="3" fill="#ff0080"/>
<polygon points="856.3,626.1 868.3,630.6 843.1,611.9 831.1,613.4" fill="#181818" stroke="#ff0080" stroke-width="1"/>
<rect x="855" y="625" width="4" height="3" fill="#ff0080"/>
<rect x="867" y="629" width="4" height="3" fill="#ff0080"/>
<rect x="842" y="610" width="4" height="3" fill="#ff0080"/>
<rect x="830" y="612" width="4" height="3" fill="#ff0080"/>
<polygon points="1045.4,664.3 1075.6,647.3 1050.4,635.1 1020.2,653.9" fill="#212121" stroke="#ff0080" stroke-width="1"/>
<rect x="1044" y="663" width="4" height="3" fill="#ff0080"/>
<rect x="1074" y="646" width="4" height="3" fill="#ff0080"/>
<rect x="1049" y="634" width="4" height="3" fill="#ff0080"/>
<rect x="1019" y="652" width="4" height="3" fill="#ff0080"/>
<polygon points="1255.0,610.8 1363.6,579.0 1346.8,570.6 1238.2,603.0" fill="#282828" stroke="#ff0080" stroke-width="1"/>
<rect x="1254" y="609" width="4" height="3" fill="#ff0080"/>
<rect x="1362" y="578" width="4" height="3" fill="#ff0080"/>
<rect x="1345" y="569" width="4" height="3" fill="#ff0080"/>
<rect x="1237" y="602" width="4" height="3" fill="#ff0080"/>
<polygon points="838.2,628.5 856.3,626.1 831.1,613.4 813.0,615.7" fill="#111111" stroke="#ff0080" stroke-width="1"/>
<rect x="837" y="627" width="4" height="3" fill="#ff0080"/>
<rect x="855" y="625" width="4" height="3" fill="#ff0080"/>
<rect x="830" y="612" width="4" height="3" fill="#ff0080"/>
<rect x="811" y="614" width="4" height="3" fill="#ff0080"/>
<polygon points="929.7,695.2 959.9,691.4 934.7,669.7 904.5,664.6" fill="#1f1f1f" stroke="#ff0080" stroke-width="1"/>
<rect x="928" y="694" width="4" height="3" fill="#ff0080"/>
<rect x="958" y="690" width="4" height="3" fill="#ff0080"/>
<rect x="933" y="668" width="4" height="3" fill="#ff0080"/>
<rect x="903" y="663" width="4" height="3" fill="#ff0080"/>
<polygon points="826.1,630.0 838.2,628.5 813.0,615.7 800.9,617.3" fill="#141414" stroke="#ff0080" stroke-width="1"/>
<rect x="825" y="629" width="4" height="3" fill="#ff0080"/>
<rect x="837" y="627" width="4" height="3" fill="#ff0080"/>
<rect x="811" y="614" width="4" height="3" fill="#ff0080"/>
<rect x="799" y="616" width="4" height="3" fill="#ff0080"/>
<polygon points="1015.3,683.7 1045.4,664.3 1020.2,653.9 990.1,673.3" fill="#202020" stroke="#ff0080" stroke-width="1"/>
<rect x="1014" y="682" width="4" height="3" fill="#ff0080"/>
<rect x="1044" y="663" width="4" height="3" fill="#ff0080"/>
<rect x="1019" y="652" width="4" height="3" fill="#ff0080"/>
<rect x="989" y="672" width="4" height="3" fill="#ff0080"/>
<polygon points="1100.8,658.4 1161.1,632.8 1135.9,622.4 1075.6,647.3" fill="#232323" stroke="#ff0080" stroke-width="1"/>
<rect x="1099" y="657" width="4" height="3" fill="#ff0080"/>
<rect x="1160" y="631" width="4" height="3" fill="#ff0080"/>
<rect x="1134" y="621" width="4" height="3" fill="#ff0080"/>
<rect x="1074" y="646" width="4" height="3" fill="#ff0080"/>
<polygon points="821.3,627.7 826.1,630.0 800.9,617.3 796.1,614.8" fill="#161616" stroke="#ff0080" stroke-width="1"/>
<rect x="820" y="626" width="4" height="3" fill="#ff0080"/>
<rect x="825" y="629" width="4" height="3" fill="#ff0080"/>
<rect x="799" y="616" width="4" height="3" fill="#ff0080"/>
<rect x="795" y="613" width="4" height="3" fill="#ff0080"/>
<polygon points="1177.9,640.4 1238.2,603.0 1221.4,595.9 1161.1,632.8" fill="#2e2e2e" stroke="#ff0080" stroke-width="1"/>
<rect x="1176" y="639" width="4" height="3" fill="#ff0080"/>
<rect x="1237" y="602" width="4" height="3" fill="#ff0080"/>
<rect x="1220" y="594" width="4" height="3" fill="#ff0080"/>
<rect x="1160" y="631" width="4" height="3" fill="#ff0080"/>
<polygon points="911.7,658.9 929.7,695.2 904.5,664.6 886.4,628.3" fill="#262626" stroke="#ff0080" stroke-width="1"/>
<rect x="910" y="657" width="4" height="3" fill="#ff0080"/>
<rect x="928" y="694" width="4" height="3" fill="#ff0080"/>
<rect x="903" y="663" width="4" height="3" fill="#ff0080"/>
<rect x="885" y="627" width="4" height="3" fill="#ff0080"/>
<polygon points="810.4,629.1 821.3,627.7 796.1,614.8 785.2,619.3" fill="#131313" stroke="#ff0080" stroke-width="1"/>
<rect x="809" y="628" width="4" height="3" fill="#ff0080"/>
<rect x="820" y="626" width="4" height="3" fill="#ff0080"/>
<rect x="795" y="613" width="4" height="3" fill="#ff0080"/>
<rect x="784" y="618" width="4" height="3" fill="#ff0080"/>
<polygon points="802.0,630.2 810.4,629.1 785.2,619.3 776.8,620.4" fill="#111111" stroke="#ff0080" stroke-width="1"/>
<rect x="801" y="629" width="4" height="3" fill="#ff0080"/>
<rect x="809" y="628" width="4" height="3" fill="#ff0080"/>
<rect x="784" y="618" width="4" height="3" fill="#ff0080"/>
<rect x="775" y="619" width="4" height="3" fill="#ff0080"/>
<polygon points="1271.8,618.5 1380.4,586.7 1363.6,579.0 1255.0,610.8" fill="#272727" stroke="#ff0080" stroke-width="1"/>
<rect x="1270" y="617" width="4" height="3" fill="#ff0080"/>
<rect x="1379" y="585" width="4" height="3" fill="#ff0080"/>
<rect x="1362" y="578" width="4" height="3" fill="#ff0080"/>
<rect x="1254" y="609" width="4" height="3" fill="#ff0080"/>
<polygon points="893.6,658.3 911.7,658.9 886.4,628.3 868.3,630.6" fill="#202020" stroke="#ff0080" stroke-width="1"/>
<rect x="892" y="657" width="4" height="3" fill="#ff0080"/>
<rect x="910" y="657" width="4" height="3" fill="#ff0080"/>
<rect x="885" y="627" width="4" height="3" fill="#ff0080"/>
<rect x="867" y="629" width="4" height="3" fill="#ff0080"/>
<polygon points="985.1,701.9 1015.3,683.7 990.1,673.3 959.9,691.4" fill="#1e1e1e" stroke="#ff0080" stroke-width="1"/>
<rect x="984" y="700" width="4" height="3" fill="#ff0080"/>
<rect x="1014" y="682" width="4" height="3" fill="#ff0080"/>
<rect x="989" y="672" width="4" height="3" fill="#ff0080"/>
<rect x="958" y="690" width="4" height="3" fill="#ff0080"/>
<polygon points="881.5,656.7 893.6,658.3 868.3,630.6 856.3,626.1" fill="#212121" stroke="#ff0080" stroke-width="1"/>
<rect x="880" y="655" width="4" height="3" fill="#ff0080"/>
<rect x="892" y="657" width="4" height="3" fill="#ff0080"/>
<rect x="867" y="629" width="4" height="3" fill="#ff0080"/>
<rect x="855" y="625" width="4" height="3" fill="#ff0080"/>
<polygon points="1070.6,674.8 1100.8,658.4 1075.6,647.3 1045.4,664.3" fill="#1c1c1c" stroke="#ff0080" stroke-width="1"/>
<rect x="1069" y="673" width="4" height="3" fill="#ff0080"/>
<rect x="1099" y="657" width="4" height="3" fill="#ff0080"/>
<rect x="1074" y="646" width="4" height="3" fill="#ff0080"/>
<rect x="1044" y="663" width="4" height="3" fill="#ff0080"/>
<polygon points="1194.7,648.2 1255.0,610.8 1238.2,603.0 1177.9,640.4" fill="#2d2d2d" stroke="#ff0080" stroke-width="1"/>
<rect x="1193" y="647" width="4" height="3" fill="#ff0080"/>
<rect x="1254" y="609" width="4" height="3" fill="#ff0080"/>
<rect x="1237" y="602" width="4" height="3" fill="#ff0080"/>
<rect x="1176" y="639" width="4" height="3" fill="#ff0080"/>
<polygon points="863.4,653.2 881.5,656.7 856.3,626.1 838.2,628.5" fill="#202020" stroke="#ff0080" stroke-width="1"/>
<rect x="862" y="652" width="4" height="3" fill="#ff0080"/>
<rect x="880" y="655" width="4" height="3" fill="#ff0080"/>
<rect x="855" y="625" width="4" height="3" fill="#ff0080"/>
<rect x="837" y="627" width="4" height="3" fill="#ff0080"/>
<polygon points="955.0,705.0 985.1,701.9 959.9,691.4 929.7,695.2" fill="#101010" stroke="#ff0080" stroke-width="1"/>
<rect x="953" y="704" width="4" height="3" fill="#ff0080"/>
<rect x="984" y="700" width="4" height="3" fill="#ff0080"/>
<rect x="958" y="690" width="4" height="3" fill="#ff0080"/>
<rect x="928" y="694" width="4" height="3" fill="#ff0080"/>
<polygon points="1117.6,666.0 1177.9,640.4 1161.1,632.8 1100.8,658.4" fill="#232323" stroke="#ff0080" stroke-width="1"/>
<rect x="1116" y="665" width="4" height="3" fill="#ff0080"/>
<rect x="1176" y="639" width="4" height="3" fill="#ff0080"/>
<rect x="1160" y="631" width="4" height="3" fill="#ff0080"/>
<rect x="1099" y="657" width="4" height="3" fill="#ff0080"/>
<polygon points="851.3,651.7 863.4,653.2 838.2,628.5 826.1,630.0" fill="#1b1b1b" stroke="#ff0080" stroke-width="1"/>
<rect x="850" y="650" width="4" height="3" fill="#ff0080"/>
<rect x="862" y="652" width="4" height="3" fill="#ff0080"/>
<rect x="837" y="627" width="4" height="3" fill="#ff0080"/>
<rect x="825" y="629" width="4" height="3" fill="#ff0080"/>
<polygon points="1040.5,694.0 1070.6,674.8 1045.4,664.3 1015.3,683.7" fill="#1e1e1e" stroke="#ff0080" stroke-width="1"/>
<rect x="1039" y="693" width="4" height="3" fill="#ff0080"/>
<rect x="1069" y="673" width="4" height="3" fill="#ff0080"/>
<rect x="1044" y="663" width="4" height="3" fill="#ff0080"/>
<rect x="1014" y="682" width="4" height="3" fill="#ff0080"/>
<polygon points="846.5,652.3 851.3,651.7 826.1,630.0 821.3,627.7" fill="#1d1d1d" stroke="#ff0080" stroke-width="1"/>
<rect x="845" y="651" width="4" height="3" fill="#ff0080"/>
<rect x="850" y="650" width="4" height="3" fill="#ff0080"/>
<rect x="825" y="629" width="4" height="3" fill="#ff0080"/>
<rect x="820" y="626" width="4" height="3" fill="#ff0080"/>
<polygon points="936.9,686.6 955.0,705.0 929.7,695.2 911.7,658.9" fill="#121212" stroke="#ff0080" stroke-width="1"/>
<rect x="935" y="685" width="4" height="3" fill="#ff0080"/>
<rect x="953" y="704" width="4" height="3" fill="#ff0080"/>
<rect x="928" y="694" width="4" height="3" fill="#ff0080"/>
<rect x="910" y="657" width="4" height="3" fill="#ff0080"/>
<polygon points="835.7,653.7 846.5,652.3 821.3,627.7 810.4,629.1" fill="#1b1b1b" stroke="#ff0080" stroke-width="1"/>
<rect x="834" y="652" width="4" height="3" fill="#ff0080"/>
<rect x="845" y="651" width="4" height="3" fill="#ff0080"/>
<rect x="820" y="626" width="4" height="3" fill="#ff0080"/>
<rect x="809" y="628" width="4" height="3" fill="#ff0080"/>
<polygon points="827.2,645.8 835.7,653.7 810.4,629.1 802.0,630.2" fill="#1a1a1a" stroke="#ff0080" stroke-width="1"/>
<rect x="826" y="644" width="4" height="3" fill="#ff0080"/>
<rect x="834" y="652" width="4" height="3" fill="#ff0080"/>
<rect x="809" y="628" width="4" height="3" fill="#ff0080"/>
<rect x="801" y="629" width="4" height="3" fill="#ff0080"/>
<polygon points="918.8,686.0 936.9,686.6 911.7,658.9 893.6,658.3" fill="#1e1e1e" stroke="#ff0080" stroke-width="1"/>
<rect x="917" y="684" width="4" height="3" fill="#ff0080"/>
<rect x="935" y="685" width="4" height="3" fill="#ff0080"/>
<rect x="910" y="657" width="4" height="3" fill="#ff0080"/>
<rect x="892" y="657" width="4" height="3" fill="#ff0080"/>
<polygon points="1010.3,712.2 1040.5,694.0 1015.3,683.7 985.1,701.9" fill="#1e1e1e" stroke="#ff0080" stroke-width="1"/>
<rect x="1009" y="711" width="4" height="3" fill="#ff0080"/>
<rect x="1039" y="693" width="4" height="3" fill="#ff0080"/>
<rect x="1014" y="682" width="4" height="3" fill="#ff0080"/>
<rect x="984" y="700" width="4" height="3" fill="#ff0080"/>
<polygon points="1211.5,656.0 1271.8,618.5 1255.0,610.8 1194.7,648.2" fill="#2c2c2c" stroke="#ff0080" stroke-width="1"/>
<rect x="1210" y="655" width="4" height="3" fill="#ff0080"/>
<rect x="1270" y="617" width="4" height="3" fill="#ff0080"/>
<rect x="1254" y="609" width="4" height="3" fill="#ff0080"/>
<rect x="1193" y="647" width="4" height="3" fill="#ff0080"/>
<polygon points="1087.5,681.9 1117.6,666.0 1100.8,658.4 1070.6,674.8" fill="#1b1b1b" stroke="#ff0080" stroke-width="1"/>
<rect x="1086" y="680" width="4" height="3" fill="#ff0080"/>
<rect x="1116" y="665" width="4" height="3" fill="#ff0080"/>
<rect x="1099" y="657" width="4" height="3" fill="#ff0080"/>
<rect x="1069" y="673" width="4" height="3" fill="#ff0080"/>
<polygon points="1134.4,673.8 1194.7,648.2 1177.9,640.4 1117.6,666.0" fill="#222222" stroke="#ff0080" stroke-width="1"/>
<rect x="1133" y="672" width="4" height="3" fill="#ff0080"/>
<rect x="1193" y="647" width="4" height="3" fill="#ff0080"/>
<rect x="1176" y="639" width="4" height="3" fill="#ff0080"/>
<rect x="1116" y="665" width="4" height="3" fill="#ff0080"/>
<polygon points="906.7,687.5 918.8,686.0 893.6,658.3 881.5,656.7" fill="#222222" stroke="#ff0080" stroke-width="1"/>
<rect x="905" y="686" width="4" height="3" fill="#ff0080"/>
<rect x="917" y="684" width="4" height="3" fill="#ff0080"/>
<rect x="892" y="657" width="4" height="3" fill="#ff0080"/>
<rect x="880" y="655" width="4" height="3" fill="#ff0080"/>
<polygon points="888.6,683.8 906.7,687.5 881.5,656.7 863.4,653.2" fill="#222222" stroke="#ff0080" stroke-width="1"/>
<rect x="887" y="682" width="4" height="3" fill="#ff0080"/>
<rect x="905" y="686" width="4" height="3" fill="#ff0080"/>
<rect x="880" y="655" width="4" height="3" fill="#ff0080"/>
<rect x="862" y="652" width="4" height="3" fill="#ff0080"/>
<polygon points="980.2,715.5 1010.3,712.2 985.1,701.9 955.0,705.0" fill="#101010" stroke="#ff0080" stroke-width="1"/>
<rect x="979" y="714" width="4" height="3" fill="#ff0080"/>
<rect x="1009" y="711" width="4" height="3" fill="#ff0080"/>
<rect x="984" y="700" width="4" height="3" fill="#ff0080"/>
<rect x="953" y="704" width="4" height="3" fill="#ff0080"/>
<polygon points="1057.3,701.3 1087.5,681.9 1070.6,674.8 1040.5,694.0" fill="#1c1c1c" stroke="#ff0080" stroke-width="1"/>
<rect x="1056" y="700" width="4" height="3" fill="#ff0080"/>
<rect x="1086" y="680" width="4" height="3" fill="#ff0080"/>
<rect x="1069" y="673" width="4" height="3" fill="#ff0080"/>
<rect x="1039" y="693" width="4" height="3" fill="#ff0080"/>
<polygon points="876.6,676.4 888.6,683.8 863.4,653.2 851.3,651.7" fill="#1f1f1f" stroke="#ff0080" stroke-width="1"/>
<rect x="875" y="675" width="4" height="3" fill="#ff0080"/>
<rect x="887" y="682" width="4" height="3" fill="#ff0080"/>
<rect x="862" y="652" width="4" height="3" fill="#ff0080"/>
<rect x="850" y="650" width="4" height="3" fill="#ff0080"/>
<polygon points="871.7,677.0 876.6,676.4 851.3,651.7 846.5,652.3" fill="#1d1d1d" stroke="#ff0080" stroke-width="1"/>
<rect x="870" y="676" width="4" height="3" fill="#ff0080"/>
<rect x="875" y="675" width="4" height="3" fill="#ff0080"/>
<rect x="850" y="650" width="4" height="3" fill="#ff0080"/>
<rect x="845" y="651" width="4" height="3" fill="#ff0080"/>
<polygon points="962.1,705.3 980.2,715.5 955.0,705.0 936.9,686.6" fill="#181818" stroke="#ff0080" stroke-width="1"/>
<rect x="961" y="704" width="4" height="3" fill="#ff0080"/>
<rect x="979" y="714" width="4" height="3" fill="#ff0080"/>
<rect x="953" y="704" width="4" height="3" fill="#ff0080"/>
<rect x="935" y="685" width="4" height="3" fill="#ff0080"/>
<polygon points="1104.3,689.5 1134.4,673.8 1117.6,666.0 1087.5,681.9" fill="#1a1a1a" stroke="#ff0080" stroke-width="1"/>
<rect x="1103" y="688" width="4" height="3" fill="#ff0080"/>
<rect x="1133" y="672" width="4" height="3" fill="#ff0080"/>
<rect x="1116" y="665" width="4" height="3" fill="#ff0080"/>
<rect x="1086" y="680" width="4" height="3" fill="#ff0080"/>
<polygon points="860.9,678.4 871.7,677.0 846.5,652.3 835.7,653.7" fill="#1d1d1d" stroke="#ff0080" stroke-width="1"/>
<rect x="859" y="677" width="4" height="3" fill="#ff0080"/>
<rect x="870" y="676" width="4" height="3" fill="#ff0080"/>
<rect x="845" y="651" width="4" height="3" fill="#ff0080"/>
<rect x="834" y="652" width="4" height="3" fill="#ff0080"/>
<polygon points="1151.2,681.6 1211.5,656.0 1194.7,648.2 1134.4,673.8" fill="#212121" stroke="#ff0080" stroke-width="1"/>
<rect x="1150" y="680" width="4" height="3" fill="#ff0080"/>
<rect x="1210" y="655" width="4" height="3" fill="#ff0080"/>
<rect x="1193" y="647" width="4" height="3" fill="#ff0080"/>
<rect x="1133" y="672" width="4" height="3" fill="#ff0080"/>
<polygon points="1027.1,719.3 1057.3,701.3 1040.5,694.0 1010.3,712.2" fill="#1b1b1b" stroke="#ff0080" stroke-width="1"/>
<rect x="1026" y="718" width="4" height="3" fill="#ff0080"/>
<rect x="1056" y="700" width="4" height="3" fill="#ff0080"/>
<rect x="1039" y="693" width="4" height="3" fill="#ff0080"/>
<rect x="1009" y="711" width="4" height="3" fill="#ff0080"/>
<polygon points="852.4,661.6 860.9,678.4 835.7,653.7 827.2,645.8" fill="#1f1f1f" stroke="#ff0080" stroke-width="1"/>
<rect x="851" y="660" width="4" height="3" fill="#ff0080"/>
<rect x="859" y="677" width="4" height="3" fill="#ff0080"/>
<rect x="834" y="652" width="4" height="3" fill="#ff0080"/>
<rect x="826" y="644" width="4" height="3" fill="#ff0080"/>
<polygon points="944.0,704.7 962.1,705.3 936.9,686.6 918.8,686.0" fill="#151515" stroke="#ff0080" stroke-width="1"/>
<rect x="942" y="703" width="4" height="3" fill="#ff0080"/>
<rect x="961" y="704" width="4" height="3" fill="#ff0080"/>
<rect x="935" y="685" width="4" height="3" fill="#ff0080"/>
<rect x="917" y="684" width="4" height="3" fill="#ff0080"/>
<polygon points="1074.1,708.3 1104.3,689.5 1087.5,681.9 1057.3,701.3" fill="#1b1b1b" stroke="#ff0080" stroke-width="1"/>
<rect x="1073" y="707" width="4" height="3" fill="#ff0080"/>
<rect x="1103" y="688" width="4" height="3" fill="#ff0080"/>
<rect x="1086" y="680" width="4" height="3" fill="#ff0080"/>
<rect x="1056" y="700" width="4" height="3" fill="#ff0080"/>
<polygon points="931.9,705.0 944.0,704.7 918.8,686.0 906.7,687.5" fill="#141414" stroke="#ff0080" stroke-width="1"/>
<rect x="930" y="703" width="4" height="3" fill="#ff0080"/>
<rect x="942" y="703" width="4" height="3" fill="#ff0080"/>
<rect x="917" y="684" width="4" height="3" fill="#ff0080"/>
<rect x="905" y="686" width="4" height="3" fill="#ff0080"/>
<polygon points="997.0,722.1 1027.1,719.3 1010.3,712.2 980.2,715.5" fill="#111111" stroke="#ff0080" stroke-width="1"/>
<rect x="995" y="721" width="4" height="3" fill="#ff0080"/>
<rect x="1026" y="718" width="4" height="3" fill="#ff0080"/>
<rect x="1009" y="711" width="4" height="3" fill="#ff0080"/>
<rect x="979" y="714" width="4" height="3" fill="#ff0080"/>
<polygon points="913.8,708.5 931.9,705.0 906.7,687.5 888.6,683.8" fill="#181818" stroke="#ff0080" stroke-width="1"/>
<rect x="912" y="707" width="4" height="3" fill="#ff0080"/>
<rect x="930" y="703" width="4" height="3" fill="#ff0080"/>
<rect x="905" y="686" width="4" height="3" fill="#ff0080"/>
<rect x="887" y="682" width="4" height="3" fill="#ff0080"/>
<polygon points="1121.1,697.3 1151.2,681.6 1134.4,673.8 1104.3,689.5" fill="#1a1a1a" stroke="#ff0080" stroke-width="1"/>
<rect x="1120" y="696" width="4" height="3" fill="#ff0080"/>
<rect x="1150" y="680" width="4" height="3" fill="#ff0080"/>
<rect x="1133" y="672" width="4" height="3" fill="#ff0080"/>
<rect x="1103" y="688" width="4" height="3" fill="#ff0080"/>
<polygon points="1044.0,726.4 1074.1,708.3 1057.3,701.3 1027.1,719.3" fill="#1b1b1b" stroke="#ff0080" stroke-width="1"/>
<rect x="1042" y="725" width="4" height="3" fill="#ff0080"/>
<rect x="1073" y="707" width="4" height="3" fill="#ff0080"/>
<rect x="1056" y="700" width="4" height="3" fill="#ff0080"/>
<rect x="1026" y="718" width="4" height="3" fill="#ff0080"/>
<polygon points="901.8,698.1 913.8,708.5 888.6,683.8 876.6,676.4" fill="#2a2a2a" stroke="#ff0080" stroke-width="1"/>
<rect x="900" y="697" width="4" height="3" fill="#ff0080"/>
<rect x="912" y="707" width="4" height="3" fill="#ff0080"/>
<rect x="887" y="682" width="4" height="3" fill="#ff0080"/>
<rect x="875" y="675" width="4" height="3" fill="#ff0080"/>
<polygon points="978.9,713.6 997.0,722.1 980.2,715.5 962.1,705.3" fill="#141414" stroke="#ff0080" stroke-width="1"/>
<rect x="977" y="712" width="4" height="3" fill="#ff0080"/>
<rect x="995" y="721" width="4" height="3" fill="#ff0080"/>
<rect x="979" y="714" width="4" height="3" fill="#ff0080"/>
<rect x="961" y="704" width="4" height="3" fill="#ff0080"/>
<polygon points="897.0,698.7 901.8,698.1 876.6,676.4 871.7,677.0" fill="#2a2a2a" stroke="#ff0080" stroke-width="1"/>
<rect x="895" y="697" width="4" height="3" fill="#ff0080"/>
<rect x="900" y="697" width="4" height="3" fill="#ff0080"/>
<rect x="875" y="675" width="4" height="3" fill="#ff0080"/>
<rect x="870" y="676" width="4" height="3" fill="#ff0080"/>
<polygon points="886.1,700.1 897.0,698.7 871.7,677.0 860.9,678.4" fill="#2a2a2a" stroke="#ff0080" stroke-width="1"/>
<rect x="885" y="699" width="4" height="3" fill="#ff0080"/>
<rect x="895" y="697" width="4" height="3" fill="#ff0080"/>
<rect x="870" y="676" width="4" height="3" fill="#ff0080"/>
<rect x="859" y="677" width="4" height="3" fill="#ff0080"/>
<polygon points="1090.9,716.1 1121.1,697.3 1104.3,689.5 1074.1,708.3" fill="#1b1b1b" stroke="#ff0080" stroke-width="1"/>
<rect x="1089" y="715" width="4" height="3" fill="#ff0080"/>
<rect x="1120" y="696" width="4" height="3" fill="#ff0080"/>
<rect x="1103" y="688" width="4" height="3" fill="#ff0080"/>
<rect x="1073" y="707" width="4" height="3" fill="#ff0080"/>
<polygon points="960.8,712.9 978.9,713.6 962.1,705.3 944.0,704.7" fill="#131313" stroke="#ff0080" stroke-width="1"/>
<rect x="959" y="711" width="4" height="3" fill="#ff0080"/>
<rect x="977" y="712" width="4" height="3" fill="#ff0080"/>
<rect x="961" y="704" width="4" height="3" fill="#ff0080"/>
<rect x="942" y="703" width="4" height="3" fill="#ff0080"/>
<polygon points="877.7,671.4 886.1,700.1 860.9,678.4 852.4,661.6" fill="#272727" stroke="#ff0080" stroke-width="1"/>
<rect x="876" y="670" width="4" height="3" fill="#ff0080"/>
<rect x="885" y="699" width="4" height="3" fill="#ff0080"/>
<rect x="859" y="677" width="4" height="3" fill="#ff0080"/>
<rect x="851" y="660" width="4" height="3" fill="#ff0080"/>
<polygon points="1013.8,729.1 1044.0,726.4 1027.1,719.3 997.0,722.1" fill="#121212" stroke="#ff0080" stroke-width="1"/>
<rect x="1012" y="728" width="4" height="3" fill="#ff0080"/>
<rect x="1042" y="725" width="4" height="3" fill="#ff0080"/>
<rect x="1026" y="718" width="4" height="3" fill="#ff0080"/>
<rect x="995" y="721" width="4" height="3" fill="#ff0080"/>
<polygon points="948.8,712.8 960.8,712.9 944.0,704.7 931.9,705.0" fill="#121212" stroke="#ff0080" stroke-width="1"/>
<rect x="947" y="711" width="4" height="3" fill="#ff0080"/>
<rect x="959" y="711" width="4" height="3" fill="#ff0080"/>
<rect x="942" y="703" width="4" height="3" fill="#ff0080"/>
<rect x="930" y="703" width="4" height="3" fill="#ff0080"/>
<polygon points="1060.8,733.7 1090.9,716.1 1074.1,708.3 1044.0,726.4" fill="#1b1b1b" stroke="#ff0080" stroke-width="1"/>
<rect x="1059" y="732" width="4" height="3" fill="#ff0080"/>
<rect x="1089" y="715" width="4" height="3" fill="#ff0080"/>
<rect x="1073" y="707" width="4" height="3" fill="#ff0080"/>
<rect x="1042" y="725" width="4" height="3" fill="#ff0080"/>
<polygon points="930.7,715.1 948.8,712.8 931.9,705.0 913.8,708.5" fill="#111111" stroke="#ff0080" stroke-width="1"/>
<rect x="929" y="714" width="4" height="3" fill="#ff0080"/>
<rect x="947" y="711" width="4" height="3" fill="#ff0080"/>
<rect x="930" y="703" width="4" height="3" fill="#ff0080"/>
<rect x="912" y="707" width="4" height="3" fill="#ff0080"/>
<polygon points="995.7,720.7 1013.8,729.1 997.0,722.1 978.9,713.6" fill="#141414" stroke="#ff0080" stroke-width="1"/>
<rect x="994" y="719" width="4" height="3" fill="#ff0080"/>
<rect x="1012" y="728" width="4" height="3" fill="#ff0080"/>
<rect x="995" y="721" width="4" height="3" fill="#ff0080"/>
<rect x="977" y="712" width="4" height="3" fill="#ff0080"/>
<polygon points="918.6,704.6 930.7,715.1 913.8,708.5 901.8,698.1" fill="#151515" stroke="#ff0080" stroke-width="1"/>
<rect x="917" y="703" width="4" height="3" fill="#ff0080"/>
<rect x="929" y="714" width="4" height="3" fill="#ff0080"/>
<rect x="912" y="707" width="4" height="3" fill="#ff0080"/>
<rect x="900" y="697" width="4" height="3" fill="#ff0080"/>
<polygon points="977.6,720.1 995.7,720.7 978.9,713.6 960.8,712.9" fill="#121212" stroke="#ff0080" stroke-width="1"/>
<rect x="976" y="719" width="4" height="3" fill="#ff0080"/>
<rect x="994" y="719" width="4" height="3" fill="#ff0080"/>
<rect x="977" y="712" width="4" height="3" fill="#ff0080"/>
<rect x="959" y="711" width="4" height="3" fill="#ff0080"/>
<polygon points="913.8,705.2 918.6,704.6 901.8,698.1 897.0,698.7" fill="#101010" stroke="#ff0080" stroke-width="1"/>
<rect x="912" y="704" width="4" height="3" fill="#ff0080"/>
<rect x="917" y="703" width="4" height="3" fill="#ff0080"/>
<rect x="900" y="697" width="4" height="3" fill="#ff0080"/>
<rect x="895" y="697" width="4" height="3" fill="#ff0080"/>
<polygon points="1030.6,736.3 1060.8,733.7 1044.0,726.4 1013.8,729.1" fill="#131313" stroke="#ff0080" stroke-width="1"/>
<rect x="1029" y="735" width="4" height="3" fill="#ff0080"/>
<rect x="1059" y="732" width="4" height="3" fill="#ff0080"/>
<rect x="1042" y="725" width="4" height="3" fill="#ff0080"/>
<rect x="1012" y="728" width="4" height="3" fill="#ff0080"/>
<polygon points="902.9,706.6 913.8,705.2 897.0,698.7 886.1,700.1" fill="#101010" stroke="#ff0080" stroke-width="1"/>
<rect x="901" y="705" width="4" height="3" fill="#ff0080"/>
<rect x="912" y="704" width="4" height="3" fill="#ff0080"/>
<rect x="895" y="697" width="4" height="3" fill="#ff0080"/>
<rect x="885" y="699" width="4" height="3" fill="#ff0080"/>
<polygon points="965.6,719.8 977.6,720.1 960.8,712.9 948.8,712.8" fill="#111111" stroke="#ff0080" stroke-width="1"/>
<rect x="964" y="718" width="4" height="3" fill="#ff0080"/>
<rect x="976" y="719" width="4" height="3" fill="#ff0080"/>
<rect x="959" y="711" width="4" height="3" fill="#ff0080"/>
<rect x="947" y="711" width="4" height="3" fill="#ff0080"/>
<polygon points="894.5,678.0 902.9,706.6 886.1,700.1 877.7,671.4" fill="#232323" stroke="#ff0080" stroke-width="1"/>
<rect x="893" y="676" width="4" height="3" fill="#ff0080"/>
<rect x="901" y="705" width="4" height="3" fill="#ff0080"/>
<rect x="885" y="699" width="4" height="3" fill="#ff0080"/>
<rect x="876" y="670" width="4" height="3" fill="#ff0080"/>
<polygon points="947.5,721.6 965.6,719.8 948.8,712.8 930.7,715.1" fill="#111111" stroke="#ff0080" stroke-width="1"/>
<rect x="946" y="720" width="4" height="3" fill="#ff0080"/>
<rect x="964" y="718" width="4" height="3" fill="#ff0080"/>
<rect x="947" y="711" width="4" height="3" fill="#ff0080"/>
<rect x="929" y="714" width="4" height="3" fill="#ff0080"/>
<polygon points="1012.5,727.8 1030.6,736.3 1013.8,729.1 995.7,720.7" fill="#151515" stroke="#ff0080" stroke-width="1"/>
<rect x="1011" y="726" width="4" height="3" fill="#ff0080"/>
<rect x="1029" y="735" width="4" height="3" fill="#ff0080"/>
<rect x="1012" y="728" width="4" height="3" fill="#ff0080"/>
<rect x="994" y="719" width="4" height="3" fill="#ff0080"/>
<polygon points="935.4,711.1 947.5,721.6 930.7,715.1 918.6,704.6" fill="#151515" stroke="#ff0080" stroke-width="1"/>
<rect x="934" y="710" width="4" height="3" fill="#ff0080"/>
<rect x="946" y="720" width="4" height="3" fill="#ff0080"/>
<rect x="929" y="714" width="4" height="3" fill="#ff0080"/>
<rect x="917" y="703" width="4" height="3" fill="#ff0080"/>
<polygon points="994.4,727.2 1012.5,727.8 995.7,720.7 977.6,720.1" fill="#121212" stroke="#ff0080" stroke-width="1"/>
<rect x="993" y="726" width="4" height="3" fill="#ff0080"/>
<rect x="1011" y="726" width="4" height="3" fill="#ff0080"/>
<rect x="994" y="719" width="4" height="3" fill="#ff0080"/>
<rect x="976" y="719" width="4" height="3" fill="#ff0080"/>
<polygon points="930.6,711.8 935.4,711.1 918.6,704.6 913.8,705.2" fill="#111111" stroke="#ff0080" stroke-width="1"/>
<rect x="929" y="710" width="4" height="3" fill="#ff0080"/>
<rect x="934" y="710" width="4" height="3" fill="#ff0080"/>
<rect x="917" y="703" width="4" height="3" fill="#ff0080"/>
<rect x="912" y="704" width="4" height="3" fill="#ff0080"/>
<polygon points="919.7,713.1 930.6,711.8 913.8,705.2 902.9,706.6" fill="#101010" stroke="#ff0080" stroke-width="1"/>
<rect x="918" y="712" width="4" height="3" fill="#ff0080"/>
<rect x="929" y="710" width="4" height="3" fill="#ff0080"/>
<rect x="912" y="704" width="4" height="3" fill="#ff0080"/>
<rect x="901" y="705" width="4" height="3" fill="#ff0080"/>
<polygon points="982.4,727.0 994.4,727.2 977.6,720.1 965.6,719.8" fill="#121212" stroke="#ff0080" stroke-width="1"/>
<rect x="981" y="725" width="4" height="3" fill="#ff0080"/>
<rect x="993" y="726" width="4" height="3" fill="#ff0080"/>
<rect x="976" y="719" width="4" height="3" fill="#ff0080"/>
<rect x="964" y="718" width="4" height="3" fill="#ff0080"/>
<polygon points="911.3,684.5 919.7,713.1 902.9,706.6 894.5,678.0" fill="#242424" stroke="#ff0080" stroke-width="1"/>
<rect x="910" y="683" width="4" height="3" fill="#ff0080"/>
<rect x="918" y="712" width="4" height="3" fill="#ff0080"/>
<rect x="901" y="705" width="4" height="3" fill="#ff0080"/>
<rect x="893" y="676" width="4" height="3" fill="#ff0080"/>
<polygon points="964.3,728.2 982.4,727.0 965.6,719.8 947.5,721.6" fill="#111111" stroke="#ff0080" stroke-width="1"/>
<rect x="963" y="727" width="4" height="3" fill="#ff0080"/>
<rect x="981" y="725" width="4" height="3" fill="#ff0080"/>
<rect x="964" y="718" width="4" height="3" fill="#ff0080"/>
<rect x="946" y="720" width="4" height="3" fill="#ff0080"/>
<polygon points="952.2,717.7 964.3,728.2 947.5,721.6 935.4,711.1" fill="#161616" stroke="#ff0080" stroke-width="1"/>
<rect x="951" y="716" width="4" height="3" fill="#ff0080"/>
<rect x="963" y="727" width="4" height="3" fill="#ff0080"/>
<rect x="946" y="720" width="4" height="3" fill="#ff0080"/>
<rect x="934" y="710" width="4" height="3" fill="#ff0080"/>
<polygon points="947.4,718.3 952.2,717.7 935.4,711.1 930.6,711.8" fill="#111111" stroke="#ff0080" stroke-width="1"/>
<rect x="946" y="717" width="4" height="3" fill="#ff0080"/>
<rect x="951" y="716" width="4" height="3" fill="#ff0080"/>
<rect x="934" y="710" width="4" height="3" fill="#ff0080"/>
<rect x="929" y="710" width="4" height="3" fill="#ff0080"/>
<polygon points="936.5,719.7 947.4,718.3 930.6,711.8 919.7,713.1" fill="#111111" stroke="#ff0080" stroke-width="1"/>
<rect x="935" y="718" width="4" height="3" fill="#ff0080"/>
<rect x="946" y="717" width="4" height="3" fill="#ff0080"/>
<rect x="929" y="710" width="4" height="3" fill="#ff0080"/>
<rect x="918" y="712" width="4" height="3" fill="#ff0080"/>
<polygon points="928.1,691.0 936.5,719.7 919.7,713.1 911.3,684.5" fill="#232323" stroke="#ff0080" stroke-width="1"/>
<rect x="927" y="690" width="4" height="3" fill="#ff0080"/>
<rect x="935" y="718" width="4" height="3" fill="#ff0080"/>
<rect x="918" y="712" width="4" height="3" fill="#ff0080"/>
<rect x="910" y="683" width="4" height="3" fill="#ff0080"/>
</g></svg>
<div style="position:absolute;left:649px;top:376px;width:756px;height:30px;background:#fff"></div>
<div style="position:absolute;left:649px;top:406px;width:756px;height:2px;background:#a8a8a8"></div>
<div style="position:absolute;left:649px;top:406px;width:2px;height:307px;background:#a8a8a8"></div>
<div style="position:absolute;left:657px;top:383px;font-family:'Liberation Sans',sans-serif;font-size:12px;letter-spacing:-0.2px;color:#999;white-space:pre;line-height:16px">Preview : Avance 1</div>
<div style="position:absolute;left:1385px;top:383px;width:19px;height:19px;background:#e5e5e5"></div>
<svg style="position:absolute;left:0;top:0" width="1418" height="713"><path d="M1392 390L1397 395M1397 390L1392 395" stroke="#fff" stroke-width="1"/></svg>
</body></html>
